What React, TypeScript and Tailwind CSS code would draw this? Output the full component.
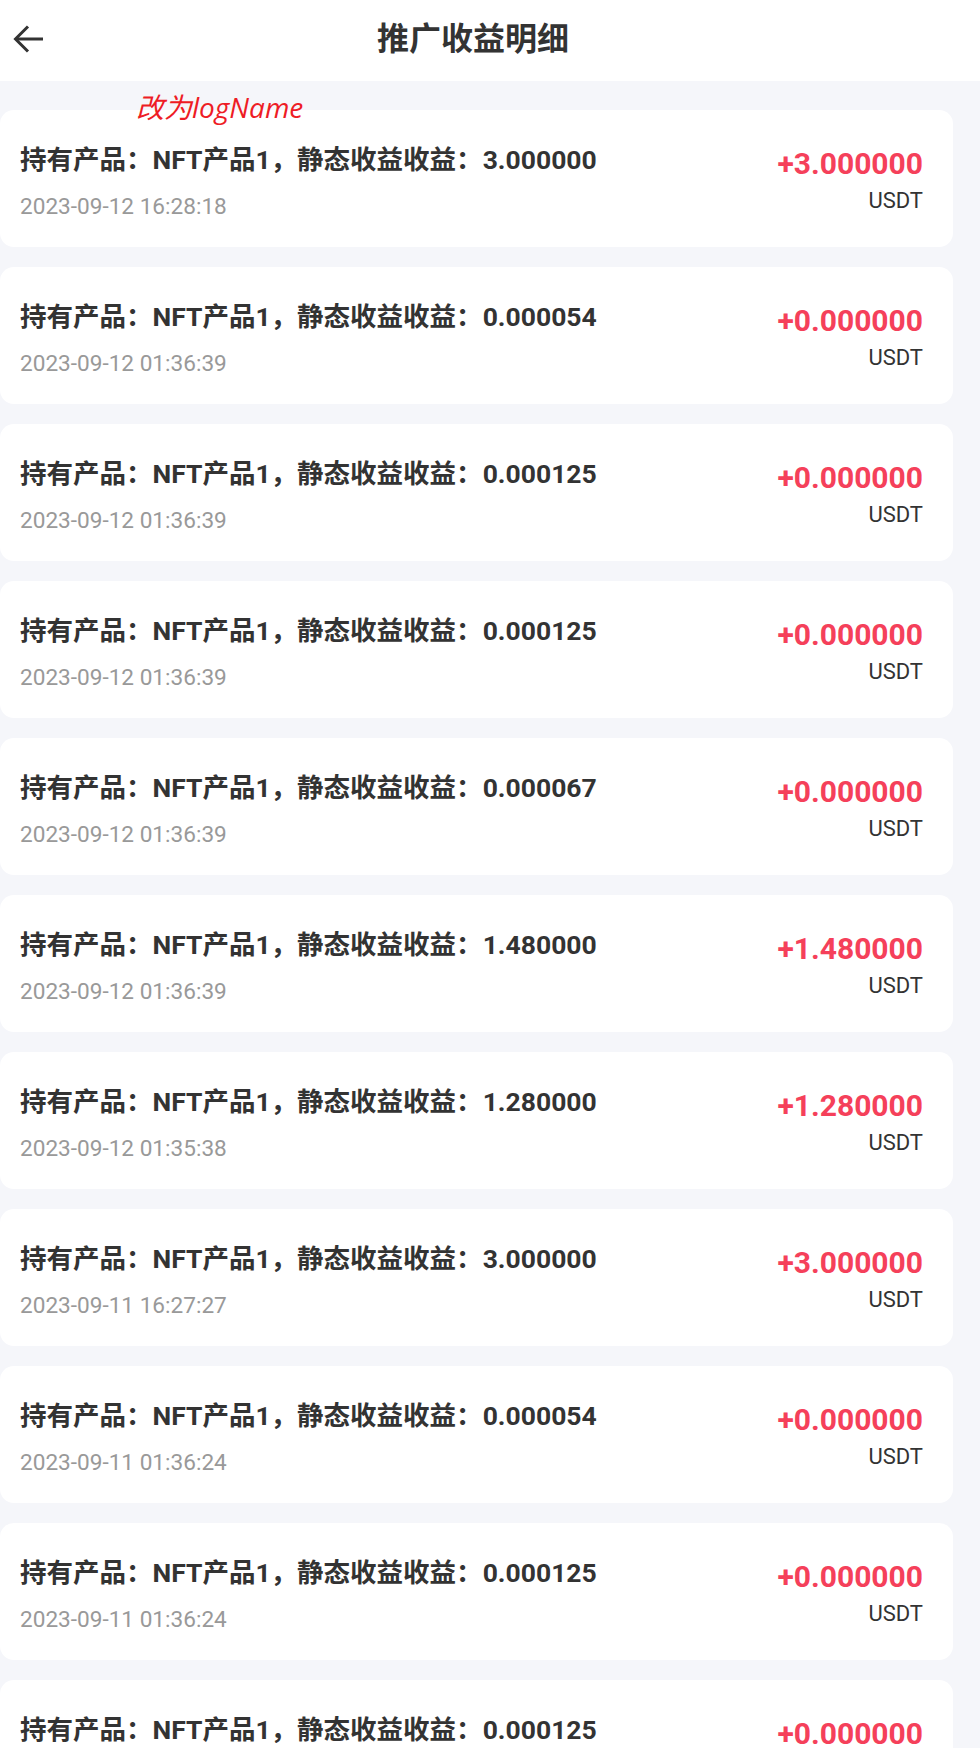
import React from "react";

const rows = [
  { v: "3.000000", t: "2023-09-12 16:28:18", a: "+3.000000" },
  { v: "0.000054", t: "2023-09-12 01:36:39", a: "+0.000000" },
  { v: "0.000125", t: "2023-09-12 01:36:39", a: "+0.000000" },
  { v: "0.000125", t: "2023-09-12 01:36:39", a: "+0.000000" },
  { v: "0.000067", t: "2023-09-12 01:36:39", a: "+0.000000" },
  { v: "1.480000", t: "2023-09-12 01:36:39", a: "+1.480000" },
  { v: "1.280000", t: "2023-09-12 01:35:38", a: "+1.280000" },
  { v: "3.000000", t: "2023-09-11 16:27:27", a: "+3.000000" },
  { v: "0.000054", t: "2023-09-11 01:36:24", a: "+0.000000" },
  { v: "0.000125", t: "2023-09-11 01:36:24", a: "+0.000000" },
  { v: "0.000125", t: "2023-09-11 01:36:24", a: "+0.000000" },
];

export default function App() {
  return (
    <div
      className="min-h-[1748px] w-[980px] bg-[#f5f6fa] overflow-hidden"
      style={{ fontFamily: 'Roboto, "Noto Sans CJK SC", sans-serif' }}
    >
      <div className="h-[81px] bg-white flex items-center pl-[13px] pr-[77px] pb-[4px]">
        <svg width="30" height="28" viewBox="0 0 30 28" fill="none" stroke="#333" strokeWidth="3" strokeLinecap="butt" strokeLinejoin="miter">
          <path d="M30 14H3" />
          <path d="M15 1.5L2.5 14L15 26.5" />
        </svg>
        <div className="flex-1 text-center text-[32px] font-bold text-[#333] leading-[40px]">推广收益明细</div>
      </div>
      <div className="relative pt-[29px] flex flex-col gap-[20px] pr-[27px]">
        <div
          className="absolute left-[136px] top-[10px] text-[28px] italic text-[#ee1c25] leading-[32px] z-10"
          style={{ fontFamily: '"Open Sans", "Noto Sans CJK SC", sans-serif' }}
        >
          改为logName
        </div>
        {rows.map((r, i) => (
          <div key={i} className="h-[137px] bg-white rounded-[14px] flex justify-between pl-[20px] pr-[30px]">
            <div className="flex flex-col">
              <div className="mt-[35px] text-[26.5px] leading-[30px] font-bold text-[#333] whitespace-nowrap">
                持有产品：NFT产品1，静态收益收益：{r.v}
              </div>
              <div className="mt-[19px] text-[22.6px] leading-[26px] text-[#999]">{r.t}</div>
            </div>
            <div className="flex flex-col items-end">
              <div className="mt-[37px] text-[30px] leading-[34px] font-bold text-[#f5405a]">{r.a}</div>
              <div className="mt-[7px] text-[22px] leading-[26px] text-[#333]">USDT</div>
            </div>
          </div>
        ))}
      </div>
    </div>
  );
}
